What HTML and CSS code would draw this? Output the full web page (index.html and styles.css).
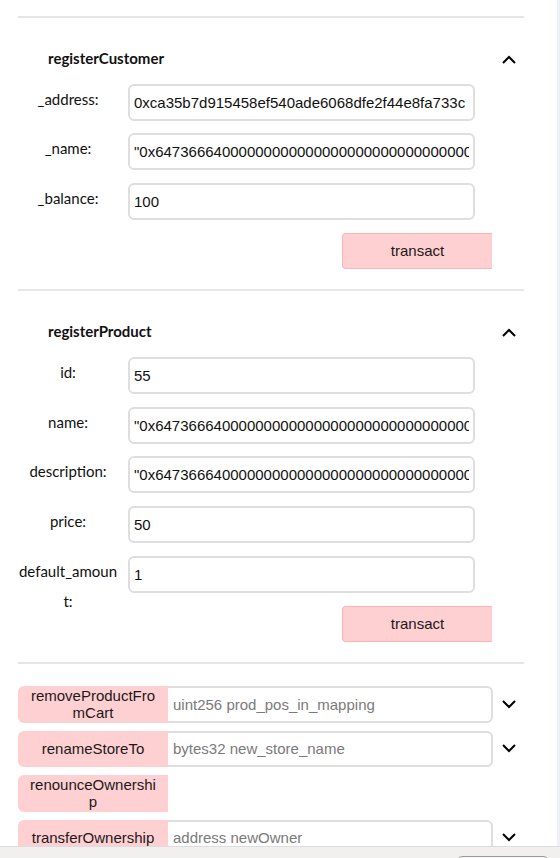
FILE: index.html
```html
<!DOCTYPE html>
<html lang="en">
<head>
<meta charset="utf-8">
<title>Contract</title>
<link rel="stylesheet" href="styles.css">
</head>
<body>
<div class="page">
  <div class="panel">
    <div class="sep"></div>
    <section class="func">
      <div class="func-head">
        <span class="func-name">registerCustomer</span>
        <svg class="chev" width="14" height="9" viewBox="0 0 14 9"><path d="M1 8 L7 2 L13 8" fill="none" stroke="#000" stroke-width="2"/></svg>
      </div>
      <div class="fields">
        <div class="field"><span class="field-label">_address:</span><input class="field-input" value="0xca35b7d915458ef540ade6068dfe2f44e8fa733c"></div>
        <div class="field"><span class="field-label">_name:</span><input class="field-input" value="&quot;0x6473666400000000000000000000000000000000000000000000000000000000&quot;"></div>
        <div class="field"><span class="field-label">_balance:</span><input class="field-input" value="100"></div>
        <div class="actions"><button class="transact">transact</button></div>
      </div>
    </section>
    <div class="sep"></div>
    <section class="func">
      <div class="func-head">
        <span class="func-name">registerProduct</span>
        <svg class="chev" width="14" height="9" viewBox="0 0 14 9"><path d="M1 8 L7 2 L13 8" fill="none" stroke="#000" stroke-width="2"/></svg>
      </div>
      <div class="fields">
        <div class="field"><span class="field-label">id:</span><input class="field-input" value="55"></div>
        <div class="field"><span class="field-label">name:</span><input class="field-input" value="&quot;0x6473666400000000000000000000000000000000000000000000000000000000&quot;"></div>
        <div class="field"><span class="field-label">description:</span><input class="field-input" value="&quot;0x6473666400000000000000000000000000000000000000000000000000000000&quot;"></div>
        <div class="field"><span class="field-label">price:</span><input class="field-input" value="50"></div>
        <div class="field"><span class="field-label">default_amount:</span><input class="field-input" value="1"></div>
        <div class="actions"><button class="transact">transact</button></div>
      </div>
    </section>
    <div class="sep"></div>
    <div class="calls">
      <div class="call">
        <button class="call-btn">removeProductFromCart</button>
        <input class="call-input" placeholder="uint256 prod_pos_in_mapping">
        <svg class="chev" width="14" height="9" viewBox="0 0 14 9"><path d="M1 1 L7 7 L13 1" fill="none" stroke="#000" stroke-width="2"/></svg>
      </div>
      <div class="call">
        <button class="call-btn">renameStoreTo</button>
        <input class="call-input" placeholder="bytes32 new_store_name">
        <svg class="chev" width="14" height="9" viewBox="0 0 14 9"><path d="M1 1 L7 7 L13 1" fill="none" stroke="#000" stroke-width="2"/></svg>
      </div>
      <div class="call">
        <button class="call-btn">renounceOwnership</button>
      </div>
      <div class="call">
        <button class="call-btn">transferOwnership</button>
        <input class="call-input" placeholder="address newOwner">
        <svg class="chev" width="14" height="9" viewBox="0 0 14 9"><path d="M1 1 L7 7 L13 1" fill="none" stroke="#000" stroke-width="2"/></svg>
      </div>
    </div>
  </div>
</div>
<div class="statusbar"><span class="status-btn"></span></div>
</body>
</html>
```
FILE: styles.css
```css
html, body {
  margin: 0;
  padding: 0;
  background: #eef0fb;
  height: 100%;
}
body {
  overflow: hidden;
}
.page {
  width: 557px;
  min-height: 100%;
  background: #fff;
}
.panel {
  width: 506px;
  margin-left: 18px;
  padding-top: 16px;
  display: flex;
  flex-direction: column;
}
.sep {
  height: 2px;
  background: #e6e6e6;
}
.func {
  padding-top: 29.5px;
  padding-bottom: 20.5px;
}
.func-head {
  display: flex;
  align-items: center;
  justify-content: space-between;
  height: 20px;
  padding: 0 8px 0 30px;
}
.func-name {
  font-family: Lato, "Liberation Sans", sans-serif;
  font-weight: 700;
  font-size: 15px;
  color: #111;
}
.chev {
  display: block;
  flex: none;
}
.func-head .chev {
  margin-top: 4px;
}
.fields {
  margin-top: 16px;
  display: flex;
  flex-direction: column;
  gap: 12.75px;
}
.field {
  display: flex;
  align-items: flex-start;
  height: 37px;
}
.field-label {
  width: 100px;
  flex: none;
  text-align: center;
  font-family: Lato, "Liberation Sans", sans-serif;
  font-size: 15px;
  line-height: 30px;
  margin-top: 0;
  color: #111;
  word-break: break-all;
}
.field-input {
  margin-left: 10px;
  width: 347px;
  height: 37px;
  box-sizing: border-box;
  border: 2px solid #dedede;
  border-radius: 6px;
  padding: 0 4px;
  font-family: "Liberation Sans", Arial, sans-serif;
  font-size: 15px;
  color: #111;
  background: #fff;
  outline: none;
}
.actions {
  display: flex;
  justify-content: flex-end;
  padding-right: 32px;
}
.transact {
  width: 150px;
  height: 36px;
  box-sizing: border-box;
  background: #ffd0d2;
  border: 1px solid #ffb3b5;
  border-right: none;
  border-radius: 4px 0 0 4px;
  font-family: "Liberation Sans", Arial, sans-serif;
  font-size: 15px;
  color: #1a1a1a;
  padding: 0;
}
.calls {
  margin-top: 22px;
  display: flex;
  flex-direction: column;
  gap: 8px;
}
.call {
  display: flex;
  align-items: center;
  height: 36.5px;
}
.call-btn {
  width: 150px;
  height: 100%;
  flex: none;
  box-sizing: border-box;
  background: #ffd0d2;
  border: none;
  border-radius: 6px 0 0 6px;
  padding: 0 10px;
  font-family: "Liberation Sans", Arial, sans-serif;
  font-size: 15px;
  line-height: 17px;
  color: #1a1a1a;
  word-break: break-all;
}
.call-input {
  width: 325px;
  height: 100%;
  box-sizing: border-box;
  border: 2px solid #dedede;
  border-left: none;
  border-radius: 0 6px 6px 0;
  padding: 0 5px;
  font-family: "Liberation Sans", Arial, sans-serif;
  font-size: 15px;
  color: #111;
  background: #fff;
  outline: none;
}
.call-input::placeholder {
  color: #7a7a7a;
}
.call .chev {
  margin-left: 9px;
}
.statusbar {
  position: fixed;
  left: 0;
  right: 0;
  bottom: 0;
  height: 12px;
  background: #f1f0ee;
  border-top: 1px solid #dcdcdc;
  box-sizing: border-box;
  display: flex;
  justify-content: flex-end;
  padding-right: 12px;
  padding-top: 9px;
}
.status-btn {
  width: 90px;
  height: 20px;
  border: 1px solid #9a9a9a;
  border-radius: 4px;
  background: #f7f7f7;
  box-sizing: border-box;
}
```
